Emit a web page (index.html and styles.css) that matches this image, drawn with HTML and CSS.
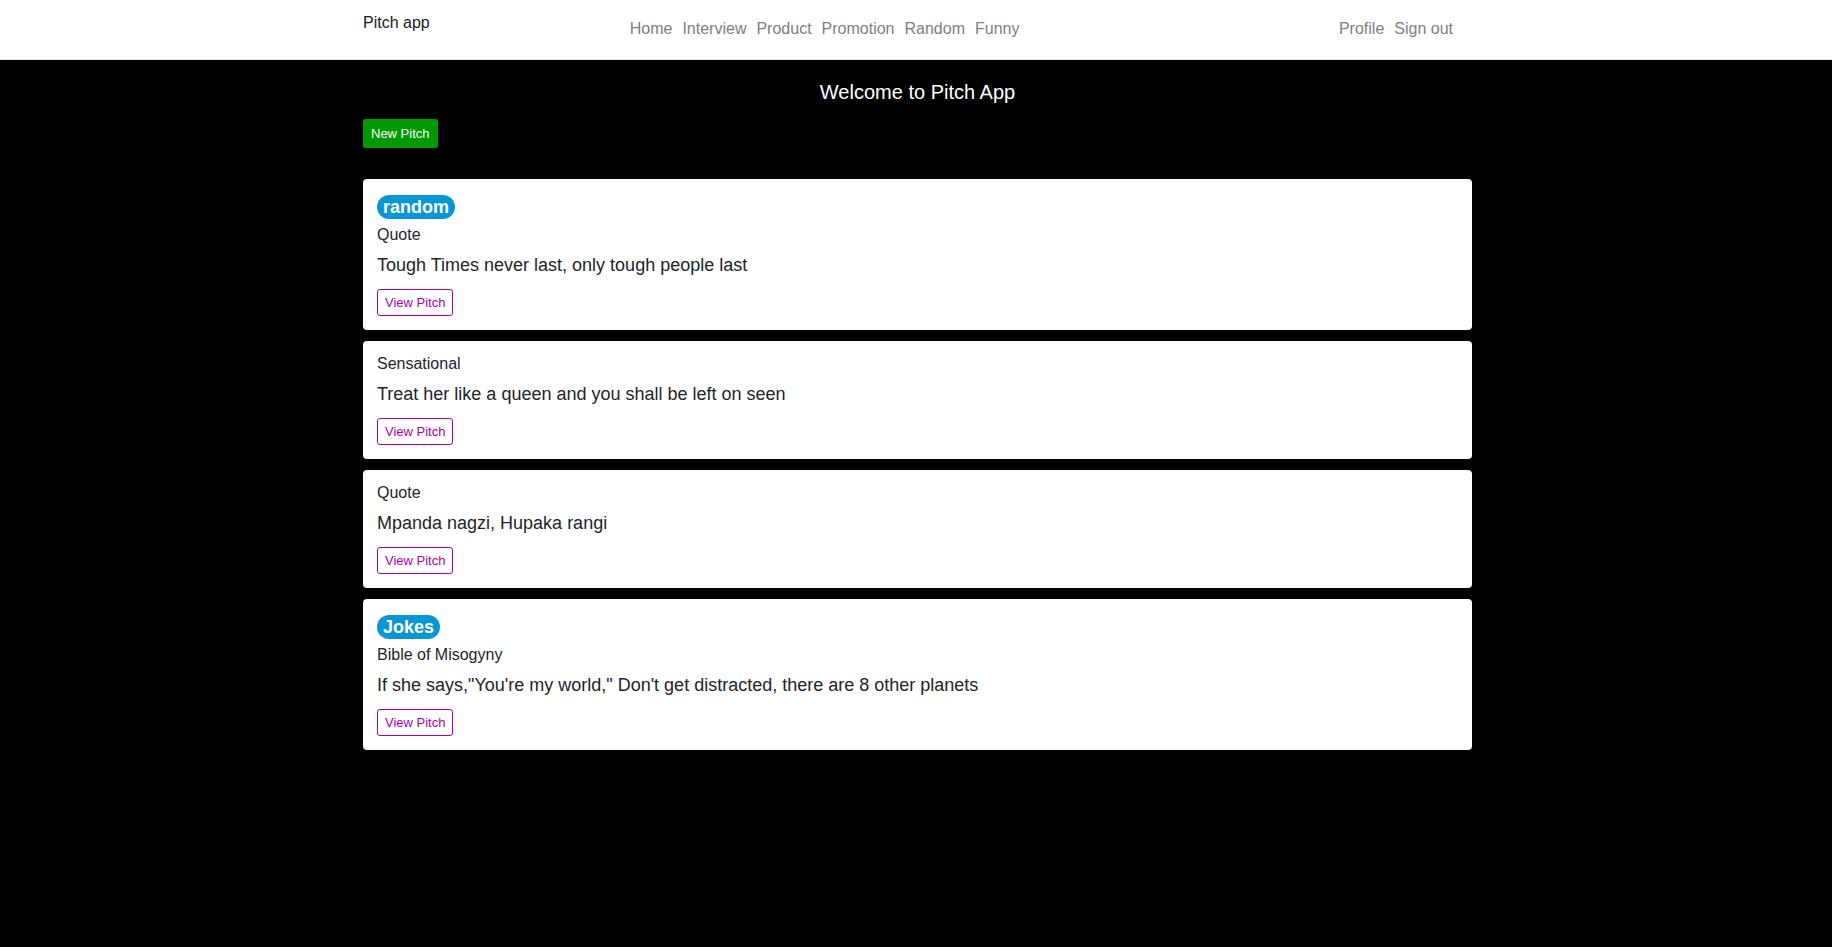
FILE: index.html
```html
<!DOCTYPE html>
<html lang="en">
<head>
<meta charset="utf-8">
<title>Pitch app</title>
<link rel="stylesheet" href="styles.css">
</head>
<body>
<nav class="navbar">
  <div class="wrap nav-inner">
    <a class="brand" href="#">Pitch app</a>
    <ul class="nav nav-main">
      <li><a href="#">Home</a></li>
      <li><a href="#">Interview</a></li>
      <li><a href="#">Product</a></li>
      <li><a href="#">Promotion</a></li>
      <li><a href="#">Random</a></li>
      <li><a href="#">Funny</a></li>
    </ul>
    <ul class="nav nav-right">
      <li><a href="#">Profile</a></li>
      <li><a href="#">Sign out</a></li>
    </ul>
  </div>
</nav>
<main class="wrap main">
  <h5 class="welcome">Welcome to Pitch App</h5>
  <div class="actions"><a class="btn-new" href="#">New Pitch</a></div>
  <div class="cards">
    <div class="card">
      <div class="badge-row"><span class="badge">random</span></div>
      <div class="card-title">Quote</div>
      <p class="card-text">Tough Times never last, only tough people last</p>
      <a class="btn-view" href="#">View Pitch</a>
    </div>
    <div class="card">
      <div class="card-title">Sensational</div>
      <p class="card-text">Treat her like a queen and you shall be left on seen</p>
      <a class="btn-view" href="#">View Pitch</a>
    </div>
    <div class="card">
      <div class="card-title">Quote</div>
      <p class="card-text">Mpanda nagzi, Hupaka rangi</p>
      <a class="btn-view" href="#">View Pitch</a>
    </div>
    <div class="card">
      <div class="badge-row"><span class="badge">Jokes</span></div>
      <div class="card-title">Bible of Misogyny</div>
      <p class="card-text">If she says,"You're my world," Don't get distracted, there are 8 other planets</p>
      <a class="btn-view" href="#">View Pitch</a>
    </div>
  </div>
</main>
</body>
</html>
```
FILE: styles.css
```css
html, body {
  margin: 0;
  padding: 0;
  background: #000;
  min-height: 100%;
}
body {
  font-family: "Liberation Sans", Arial, Helvetica, sans-serif;
  font-size: 16px;
  line-height: 24px;
  color: #212529;
}
a { text-decoration: none; }
ul { list-style: none; margin: 0; padding: 0; }

.wrap {
  width: 1109px;
  margin: 0 auto;
  padding-left: 3px;
  padding-right: 0;
  box-sizing: content-box;
}

.navbar {
  background: #fff;
  height: 59px;
  border-bottom: 1px solid #e2e2e2;
}
.nav-inner {
  display: flex;
  align-items: flex-start;
  height: 59px;
}
.brand {
  color: #1a1a1a;
  font-size: 16px;
  line-height: 24px;
  margin-top: 11px;
}
.nav {
  display: flex;
  margin-top: 17px;
}
.nav a {
  display: block;
  color: #808080;
  font-size: 16px;
  line-height: 24px;
  padding: 0 5px;
}
.nav-main { margin-left: 195px; }
.nav-right { margin-left: auto; margin-right: 14px; }

.main { padding-bottom: 40px; }
.welcome {
  margin: 20px 0 0;
  text-align: center;
  color: #fff;
  font-size: 20px;
  line-height: 24px;
  font-weight: normal;
}
.actions {
  margin-top: 15px;
  display: flex;
}
.btn-new {
  display: inline-block;
  background: #009900;
  color: #fff;
  font-size: 13px;
  line-height: 19px;
  padding: 5px 8px;
  border-radius: 2px;
}
.cards {
  margin-top: 31px;
  display: flex;
  flex-direction: column;
  gap: 11px;
}
.card {
  background: #fff;
  border-radius: 4px;
  padding: 11px 14px 14px;
  display: flex;
  flex-direction: column;
  align-items: flex-start;
}
.badge-row {
  display: flex;
  padding: 5px 0 4px;
}
.badge {
  display: inline-block;
  background: #0897d5;
  color: #fff;
  font-weight: bold;
  font-size: 18px;
  line-height: 24px;
  height: 24px;
  padding: 0 6px;
  border-radius: 12px;
}
.card-title {
  font-size: 16px;
  line-height: 24px;
}
.card-text {
  margin: 5px 0 0;
  font-size: 18px;
  line-height: 27px;
}
.btn-view {
  margin-top: 10px;
  display: inline-block;
  color: #aa00aa;
  border: 1px solid #aa00aa;
  border-radius: 3px;
  font-size: 13px;
  line-height: 25px;
  height: 25px;
  padding: 0 7px;
}
```
